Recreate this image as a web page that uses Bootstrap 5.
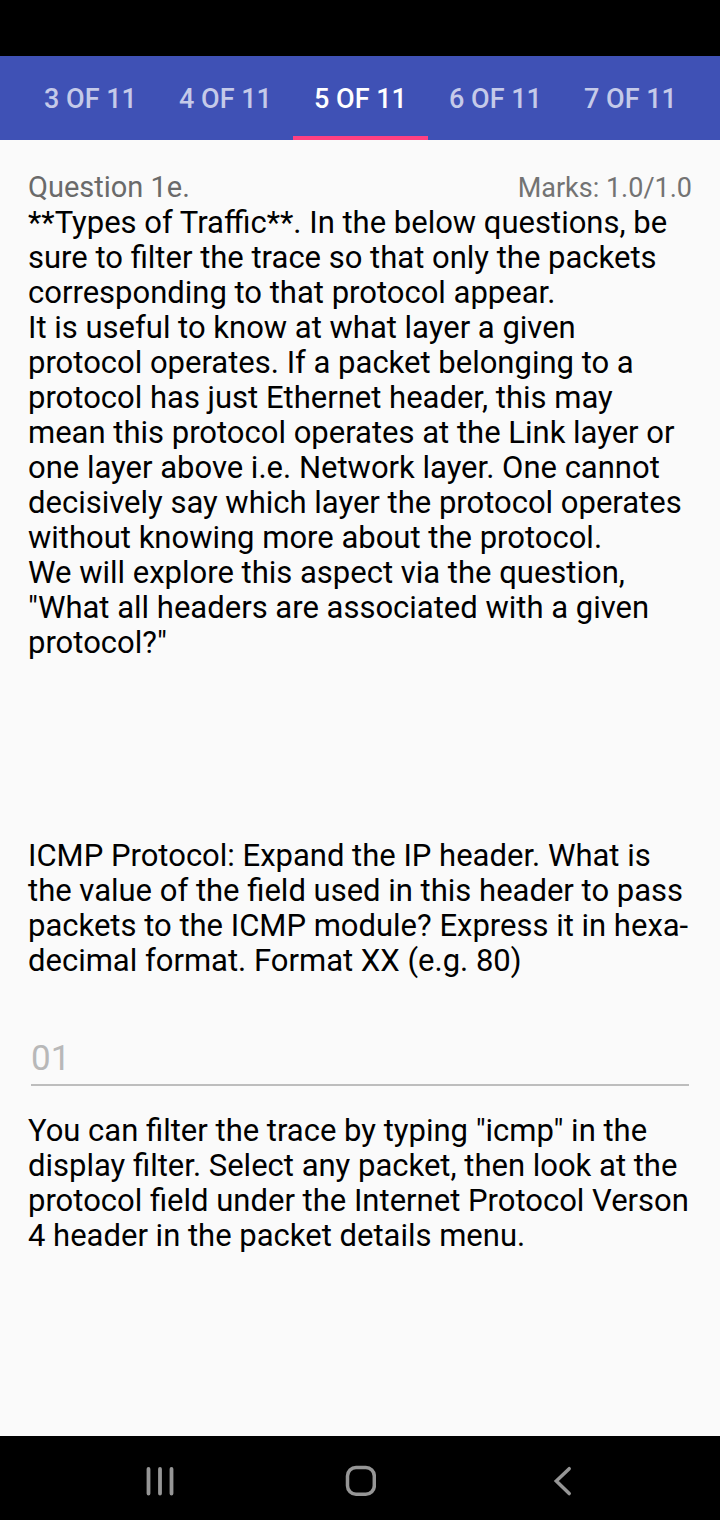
<!DOCTYPE html>
<html lang="en">
<head>
<meta charset="utf-8">
<meta name="viewport" content="width=device-width, initial-scale=1">
<title>Question 1e</title>
<link href="https://cdn.jsdelivr.net/npm/bootstrap@5.3.0/dist/css/bootstrap.min.css" rel="stylesheet">
<style>
  body { font-family: Roboto, sans-serif; background: #fafafa; color: #000; }
  .status-strip { height: 56px; }
  .tab-strip { background: #3f51b5; padding: 0 22px 0 23px; }
  .tab-strip .nav-link { height: 84px; padding: 6px 0 0; border-bottom: 4px solid transparent; border-radius: 0; font-size: 27px; font-weight: 500; color: #c5cae9; white-space: nowrap; }
  .tab-strip .nav-link.active { color: #fff; border-bottom-color: #ff4081; }
  .question-page { padding: 30px 28px; }
  .question-meta { height: 35px; color: #737373; line-height: 35px; }
  .question-name { font-size: 29px; color: #6a6a6a; }
  .question-marks { font-size: 27px; }
  .prose { font-size: 31px; line-height: 35px; }
  .intro { margin-bottom: 178px; }
  .answer { margin: 49px 3px 27px; }
  .answer-box { font-size: 35px; line-height: 42px; padding: 11px 0 4px; border: 0; border-bottom: 2px solid #bdbdbd; border-radius: 0; background: transparent; color: #b8b8b8; }
  .answer-box:disabled { background: transparent; opacity: 1; }
  .system-bar { height: 84px; padding: 6px 60px 0; }
  .system-bar .btn { padding: 0; border: 0; }
</style>
</head>
<body class="min-vh-100 d-flex flex-column">
  <div class="status-strip bg-black"></div>
  <nav class="tab-strip" aria-label="Questions">
    <div class="nav nav-justified flex-nowrap">
      <a class="nav-link nav-item d-flex align-items-center justify-content-center" href="#q3">3 OF 11</a>
      <a class="nav-link nav-item d-flex align-items-center justify-content-center" href="#q4">4 OF 11</a>
      <a class="nav-link nav-item active d-flex align-items-center justify-content-center" href="#q5" aria-current="page">5 OF 11</a>
      <a class="nav-link nav-item d-flex align-items-center justify-content-center" href="#q6">6 OF 11</a>
      <a class="nav-link nav-item d-flex align-items-center justify-content-center" href="#q7">7 OF 11</a>
    </div>
  </nav>
  <main class="question-page flex-grow-1">
    <div class="question-meta d-flex justify-content-between align-items-baseline">
      <span class="question-name">Question 1e.</span>
      <span class="question-marks">Marks: 1.0/1.0</span>
    </div>
    <div class="prose intro">
      <p class="m-0">**Types of Traffic**. In the below questions, be sure to filter the trace so that only the packets corresponding to that protocol appear.</p>
      <p class="m-0">It is useful to know at what layer a given protocol operates. If a packet belonging to a protocol has just Ethernet header, this may mean this protocol operates at the Link layer or one layer above i.e. Network layer. One cannot decisively say which layer the protocol operates without knowing more about the protocol.</p>
      <p class="m-0">We will explore this aspect via the question, "What all headers are associated with a given protocol?"</p>
    </div>
    <label class="prose d-block" for="answer">ICMP Protocol: Expand the IP header. What is the value of the field used in this header to pass packets to the ICMP module? Express it in hexa-decimal format. Format XX (e.g. 80)</label>
    <div class="answer">
      <input class="form-control answer-box" id="answer" type="text" value="01" disabled>
    </div>
    <p class="prose m-0">You can filter the trace by typing "icmp" in the display filter. Select any packet, then look at the protocol field under the Internet Protocol Verson 4 header in the packet details menu.</p>
  </main>
  <footer class="system-bar bg-black d-flex align-items-center">
    <button class="btn flex-fill" type="button" aria-label="Recent apps">
      <svg width="32" height="32" viewBox="0 0 32 32" fill="none" stroke="#969696" stroke-width="3.8" stroke-linecap="round"><path d="M4.5 4v24.500M16 4v24.500M27.500 4v24.500"/></svg>
    </button>
    <button class="btn flex-fill" type="button" aria-label="Home">
      <svg width="32" height="32" viewBox="0 0 32 32" fill="none" stroke="#969696" stroke-width="3.5"><rect x="3.500" y="2.500" width="26.800" height="26.800" rx="8.500"/></svg>
    </button>
    <button class="btn flex-fill" type="button" aria-label="Back">
      <svg width="32" height="32" viewBox="0 0 32 32" fill="none" stroke="#969696" stroke-width="3.5" stroke-linecap="round"><path d="M25.200 3.700L12.300 16l12.900 12.600"/></svg>
    </button>
  </footer>
<script src="https://cdn.jsdelivr.net/npm/bootstrap@5.3.0/dist/js/bootstrap.bundle.min.js"></script>
</body>
</html>
